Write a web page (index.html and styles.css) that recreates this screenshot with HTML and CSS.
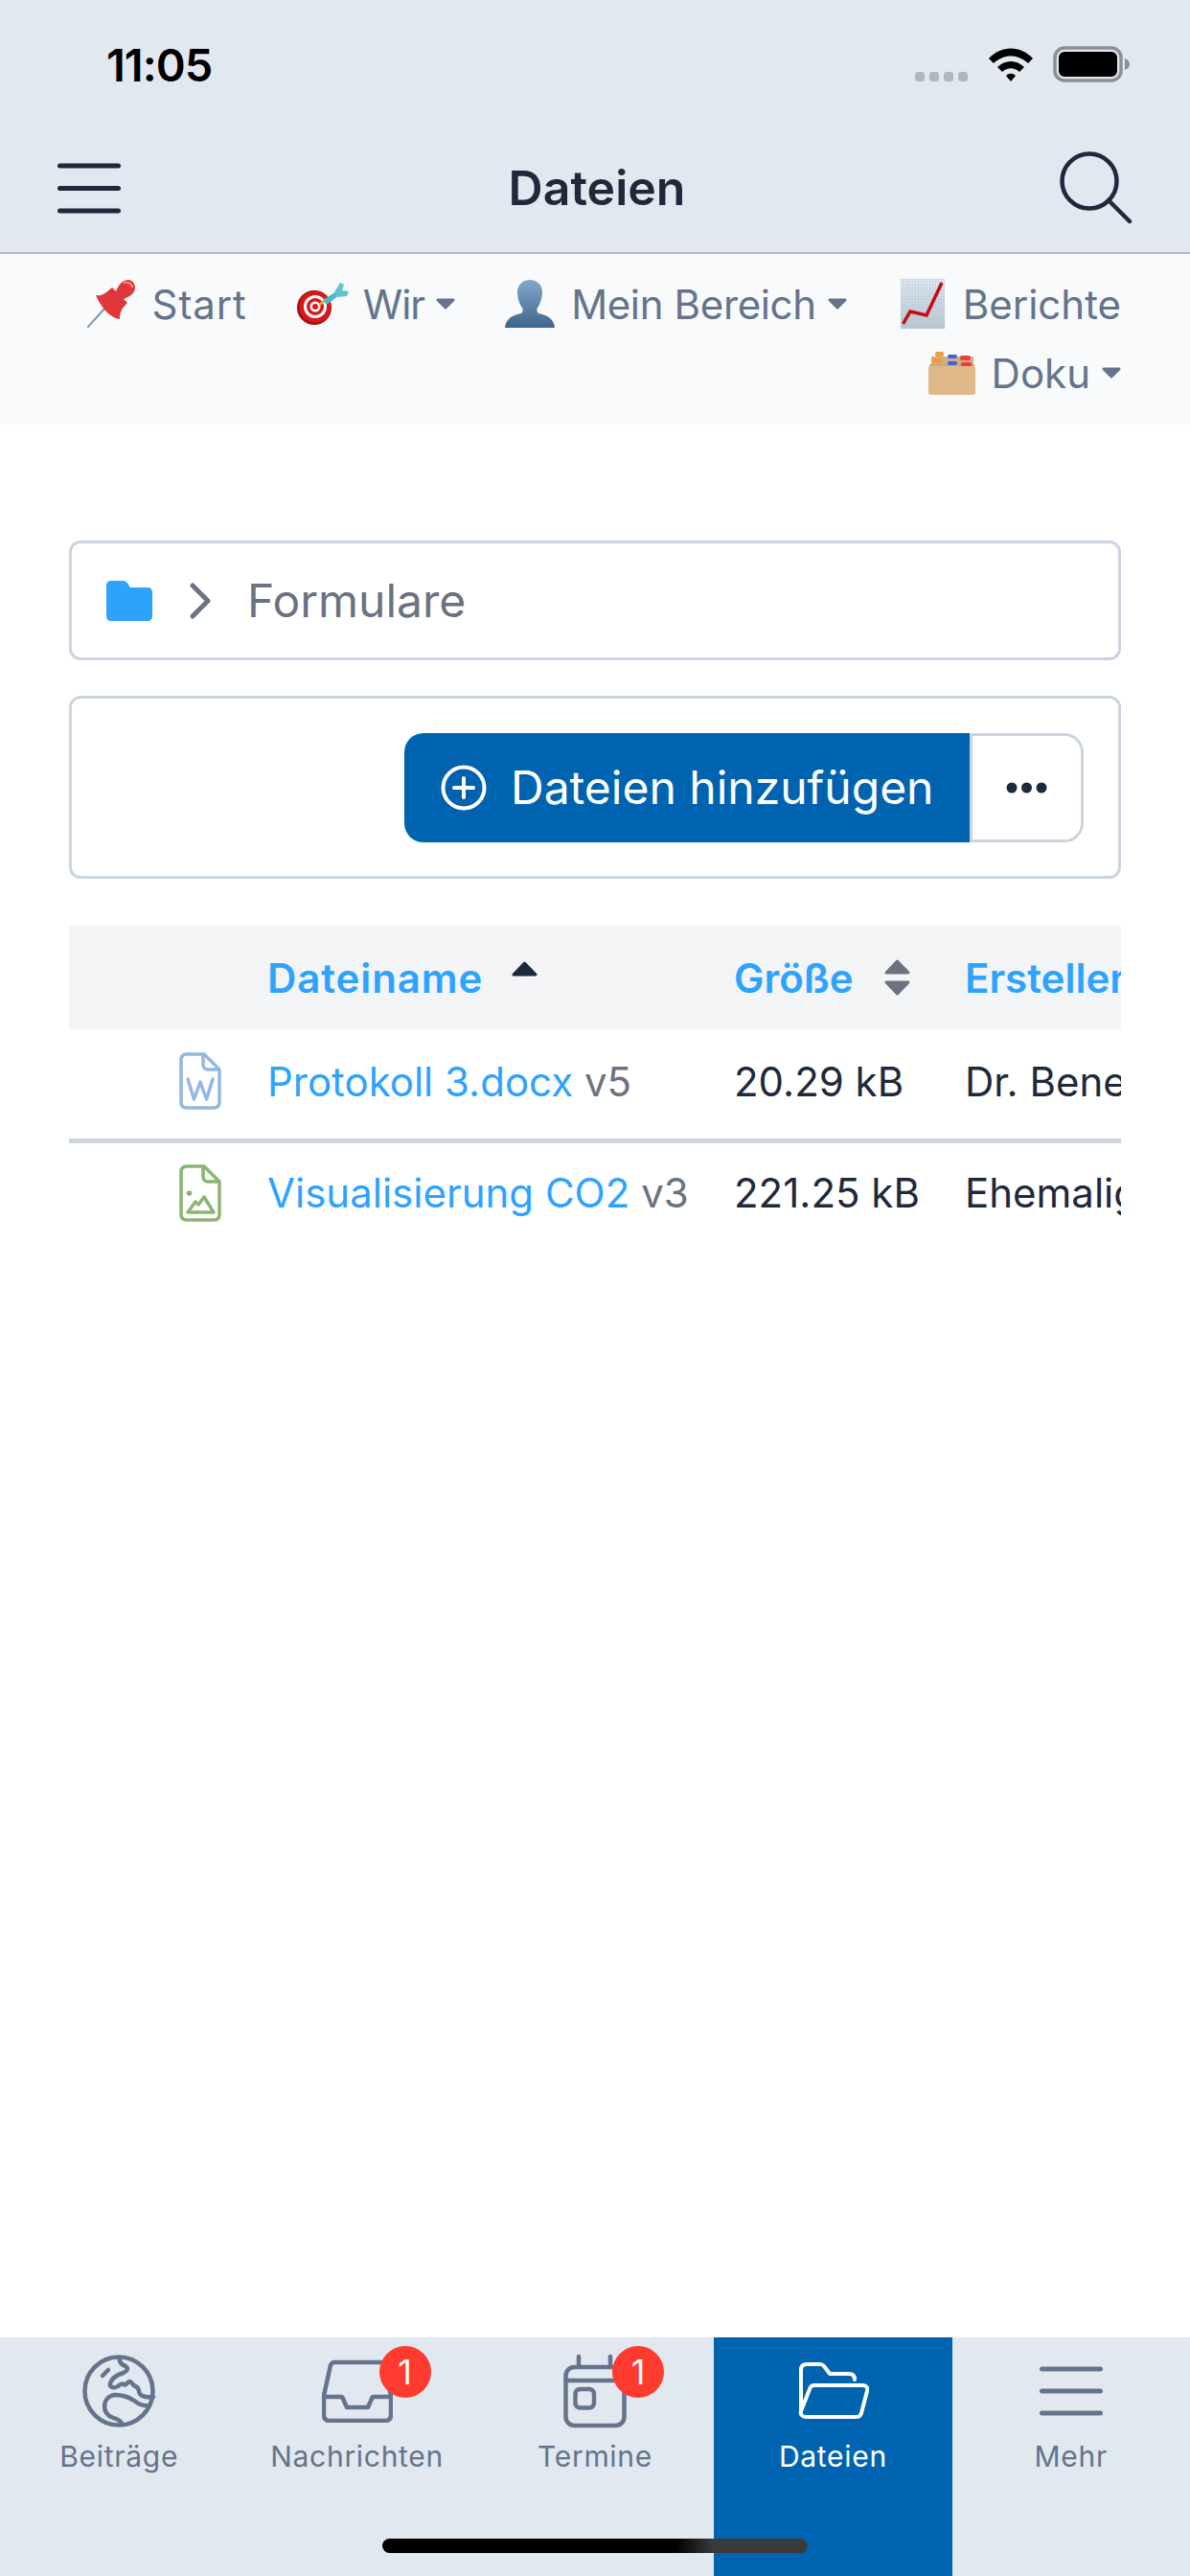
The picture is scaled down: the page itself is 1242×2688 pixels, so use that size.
FILE: index.html
```html
<!DOCTYPE html>
<html lang="de">
<head>
  <meta charset="UTF-8" />
  <meta name="viewport" content="width=device-width, initial-scale=1" />
  <title>Dateien</title>
  <link rel="stylesheet" href="styles.css">
</head>
<body>
  <div class="app">
    <header class="top">
      <div class="status-bar">
        <span class="time">11:05</span>
        <div class="status-icons">
          <svg class="signal" width="56" height="12" viewBox="0 0 56 12"><g fill="#b0b7c1"><rect x="0" y="1" width="10" height="10" rx="3"/><rect x="15" y="1" width="10" height="10" rx="3"/><rect x="30" y="1" width="10" height="10" rx="3"/><rect x="45" y="1" width="10" height="10" rx="3"/></g></svg>
          <svg class="wifi" width="48" height="38" viewBox="0 0 48 38"><path d="M1 13 C14 -1 34 -1 47 13 L42 18 C31 8 17 8 6 18Z M10 22 C18 14 30 14 38 22 L33 27 C27 22 21 22 15 27Z M19 31 C22 28 26 28 29 31 L24 37Z" fill="#000"/></svg>
          <svg class="battery" width="80" height="38" viewBox="0 0 80 38"><rect x="2" y="2" width="69" height="34" rx="10" fill="none" stroke="#8b9097" stroke-width="3.500"/><rect x="6" y="6" width="61" height="26" rx="6" fill="#000"/><path d="M75 13 C78 14 80 16 80 19 C80 22 78 24 75 25Z" fill="#8b9097"/></svg>
        </div>
      </div>
      <div class="nav-bar">
        <svg width="66" height="53" viewBox="0 0 66 53"><g stroke="#1e293b" stroke-width="5" stroke-linecap="round"><path d="M2.500 3H63.500M2.500 26.500H63.500M2.500 50H63.500"/></g></svg>
        <h1 class="nav-title">Dateien</h1>
        <svg width="76" height="76" viewBox="0 0 76 76"><circle cx="31" cy="31" r="28.500" fill="none" stroke="#1e293b" stroke-width="4.500"/><path d="M51 51L73 73" stroke="#1e293b" stroke-width="4.500" stroke-linecap="round"/></svg>
      </div>
    </header>

    <nav class="menu">
      <a class="menu-item">
        <svg class="emoji emoji-pin" width="50" height="50" viewBox="0 0 50 50">
          <path d="M0 50L19 29" stroke="#7f97ad" stroke-width="2"/>
          <path d="M9 16C15 17 18 15 26 8L30 12C33 4 38 0 43 0C47 0 50 4 50 8C50 13 46 17 38 20L42 24C35 31 34 35 34 41C28 41 16 33 9 16Z" fill="#e0383a"/>
          <path d="M38 3C43 2 47 4 47 8" stroke="#f58a85" stroke-width="2" fill="none"/>
        </svg>
        <span class="label-start">Start</span>
      </a>
      <a class="menu-item">
        <svg class="emoji emoji-target" width="54" height="46" viewBox="0 0 54 46">
          <circle cx="18" cy="27" r="18" fill="#a80f12"/>
          <circle cx="19" cy="26" r="16.500" fill="#d8191c"/>
          <circle cx="19" cy="26" r="12" fill="#fff"/>
          <circle cx="19" cy="26" r="9" fill="#d8191c"/>
          <circle cx="19" cy="26" r="5.500" fill="#fff"/>
          <circle cx="19" cy="26" r="3" fill="#d8191c"/>
          <path d="M23 24L30 19" stroke="#e8b81e" stroke-width="2.500"/>
          <path d="M27 19L41 10L44 14L31 24Z" fill="#4fb9c6"/>
          <path d="M39 11L45 1L49 3L47 9L54 10L52 15L43 16Z" fill="#5cc3cf"/>
        </svg>
        <span class="label-wir">Wir</span>
        <svg class="caret" width="20" height="12" viewBox="0 0 20 12"><path d="M2 2H18L10 10Z" fill="#64748b" stroke="#64748b" stroke-width="3" stroke-linejoin="round"/></svg>
      </a>
      <a class="menu-item">
        <svg class="emoji" width="52" height="50" viewBox="0 0 52 50">
          <defs><linearGradient id="skin" x1="0" y1="0" x2="0" y2="1"><stop offset="0" stop-color="#80a9ca"/><stop offset="1" stop-color="#40658c"/></linearGradient></defs>
          <path d="M0 50C1 40 8 37 17 35C19 33 19 31 18 29C14 24 13 16 13 13C13 4 20 0 26 0C32 0 39 4 39 13C39 16 38 24 34 29C33 31 33 33 35 35C44 37 51 40 52 50Z" fill="url(#skin)"/>
        </svg>
        <span class="label-mein">Mein Bereich</span>
        <svg class="caret" width="20" height="12" viewBox="0 0 20 12"><path d="M2 2H18L10 10Z" fill="#64748b" stroke="#64748b" stroke-width="3" stroke-linejoin="round"/></svg>
      </a>
      <a class="menu-item">
        <svg class="emoji emoji-chart" width="46" height="52" viewBox="0 0 46 52">
          <defs>
            <linearGradient id="paper" x1="0" y1="0" x2="0" y2="1"><stop offset="0" stop-color="#dfeaf4"/><stop offset="1" stop-color="#b9c7d3"/></linearGradient>
            <pattern id="grid" width="3" height="3" patternUnits="userSpaceOnUse"><path d="M3 0H0V3" fill="none" stroke="#a9bac9" stroke-width=".6"/></pattern>
          </defs>
          <rect width="46" height="52" fill="url(#paper)"/>
          <rect width="46" height="52" fill="url(#grid)"/>
          <path d="M2.500 47L10 34L27 38L43 4" fill="none" stroke="#c40d0d" stroke-width="3.500"/>
        </svg>
        <span>Berichte</span>
      </a>
      <a class="menu-item">
        <svg class="emoji" width="49" height="46" viewBox="0 0 49 46">
          <path d="M3 6H47V20H3Z" fill="#cdb088"/>
          <path d="M1 14H48V20H1Z" fill="#c9a87b"/>
          <rect x="7" y="1" width="9" height="5" rx="2" fill="#f39a3d"/>
          <rect x="20" y="4" width="10" height="4" rx="2" fill="#3f5fe0"/>
          <rect x="33" y="5" width="11" height="5" rx="2" fill="#ee4036"/>
          <rect x="4" y="8" width="10" height="5" rx="2" fill="#f39a3d"/>
          <rect x="20" y="11" width="10" height="4" rx="2" fill="#3f5fe0"/>
          <rect x="34" y="12" width="11" height="5" rx="2" fill="#ee4036"/>
          <rect y="16" width="49" height="30" rx="2" fill="#e0b988"/>
        </svg>
        <span>Doku</span>
        <svg class="caret" width="20" height="12" viewBox="0 0 20 12"><path d="M2 2H18L10 10Z" fill="#64748b" stroke="#64748b" stroke-width="3" stroke-linejoin="round"/></svg>
      </a>
    </nav>

    <main class="content">
      <div class="panel breadcrumb">
        <svg width="48" height="42" viewBox="0 0 48 42"><path d="M0 5C0 2 2 0 5 0H17C20 0 21 1 23 4L25 7H43C46 7 48 9 48 12V37C48 40 46 42 43 42H5C2 42 0 40 0 37Z" fill="#2ea3fd"/></svg>
        <svg class="crumb-sep" width="23" height="38" viewBox="0 0 23 38"><path d="M3 3L19 19L3 35" fill="none" stroke="#6b7280" stroke-width="5" stroke-linecap="round" stroke-linejoin="round"/></svg>
        <span class="crumb-name">Formulare</span>
      </div>

      <div class="panel toolbar">
        <button class="btn-add">
          <svg width="48" height="48" viewBox="0 0 48 48"><circle cx="24" cy="24" r="21.500" fill="none" stroke="#fff" stroke-width="4"/><path d="M24 14V34M14 24H34" stroke="#fff" stroke-width="4" stroke-linecap="round"/></svg>
          <span>Dateien hinzufügen</span>
        </button>
        <button class="btn-more">
          <svg width="43" height="12" viewBox="0 0 43 12"><g fill="#1e293b"><circle cx="6" cy="6" r="5.500"/><circle cx="21.500" cy="6" r="5.500"/><circle cx="37" cy="6" r="5.500"/></g></svg>
        </button>
      </div>

      <div class="file-table">
        <div class="table-row table-head">
          <div></div>
          <div class="head-cell"><span class="head-name">Dateiname</span>
            <svg class="sort-one" width="27" height="16" viewBox="0 0 27 16"><path d="M13.500 2L25 14H2Z" fill="#1e293b" stroke="#1e293b" stroke-width="3" stroke-linejoin="round"/></svg>
          </div>
          <div class="head-cell">Größe
            <svg class="sort-both" width="27" height="38" viewBox="0 0 27 38"><path d="M13.500 2L25 14H2ZM2 24H25L13.500 36Z" fill="#6b7280" stroke="#6b7280" stroke-width="3" stroke-linejoin="round"/></svg>
          </div>
          <div class="head-cell">Ersteller</div>
        </div>
        <div class="table-row file-row">
          <svg width="44" height="60" viewBox="0 0 44 60" class="file-icon file-word">
            <path d="M8 2H26L42 18V52C42 56 40 58 36 58H8C4 58 2 56 2 52V8C2 4 4 2 8 2Z M25 2V13C25 16 27 18 30 18H42" fill="none" stroke="currentColor" stroke-width="3.500" stroke-linejoin="round"/>
            <path d="M9 28L15.500 49L22 31L28.500 49L35 28" fill="none" stroke="currentColor" stroke-width="3.500" stroke-linecap="round" stroke-linejoin="round"/>
          </svg>
          <div><a class="file-link">Protokoll 3.docx</a> <span class="version">v5</span></div>
          <div>20.29 kB</div>
          <div>Dr. Benedikt Weber</div>
        </div>
        <div class="table-row file-row">
          <svg width="44" height="60" viewBox="0 0 44 60" class="file-icon file-image">
            <path d="M8 2H26L42 18V52C42 56 40 58 36 58H8C4 58 2 56 2 52V8C2 4 4 2 8 2Z M25 2V13C25 16 27 18 30 18H42" fill="none" stroke="currentColor" stroke-width="3.500" stroke-linejoin="round"/>
            <circle cx="10.500" cy="30" r="2.800" fill="currentColor"/>
            <path d="M9 50L17 39L20 42L26 34L36 50Z" fill="none" stroke="currentColor" stroke-width="3.500" stroke-linejoin="round"/>
          </svg>
          <div><a class="file-link">Visualisierung CO2</a> <span class="version">v3</span></div>
          <div>221.25 kB</div>
          <div>Ehemaliger Nutzer</div>
        </div>
      </div>
    </main>

    <footer class="tab-bar">
      <div class="tab">
        <div class="tab-icon">
          <svg width="80" height="80" viewBox="0 0 80 80"><g fill="none" stroke="#64748b" stroke-width="4.500" stroke-linecap="round" stroke-linejoin="round"><circle cx="40" cy="40" r="35.500"/><path d="M40.700 7C41 12 45 13 47 14C51 17 48 19 45 21C38 23 33 26 31 32C30 37 36 37 39 35C41 34 43 31 45 33C47 35 49 31 51 30C54 30 54 34 57 35C62 36 60 40 62 43C64 46 71 47 76 46"/><path d="M72 55C64 56 60 53 56 50C50 46 44 44 36 44C29 45 25 50 25 56C25 62 29 66 34 68C39 69 42 71 44 75"/><path d="M23 24L29 18"/></g></svg>
        </div>
        <span class="tab-label">Beiträge</span>
      </div>
      <div class="tab">
        <div class="tab-icon">
          <svg width="74" height="66" viewBox="0 0 74 66"><g fill="none" stroke="#64748b" stroke-width="4.500" stroke-linejoin="round"><path d="M13 3H61C63 3 64 4 65 6L72 38V58C72 62 70 64 66 64H8C4 64 2 62 2 58V38L9 6C10 4 11 3 13 3Z"/><path d="M2 39H20C21 39 22 40 22 41L26 50H48L52 41C52 40 53 39 55 39H72"/></g></svg>
          <span class="badge badge-inbox">1</span>
        </div>
        <span class="tab-label">Nachrichten</span>
      </div>
      <div class="tab">
        <div class="tab-icon">
          <svg width="70" height="78" viewBox="0 0 70 78"><g fill="none" stroke="#64748b" stroke-width="4.500" stroke-linecap="round" stroke-linejoin="round"><rect x="4.500" y="14" width="61" height="61" rx="9"/><path d="M18 3V14M51 3V14M4.500 28H65.500"/><rect x="14.500" y="37" width="19.500" height="19.500" rx="5"/></g></svg>
          <span class="badge badge-cal">1</span>
        </div>
        <span class="tab-label">Termine</span>
      </div>
      <div class="tab tab-active">
        <div class="tab-icon">
          <svg width="76" height="62" viewBox="0 0 76 62"><g fill="none" stroke="#fff" stroke-width="4" stroke-linejoin="round" stroke-linecap="round"><path d="M5 52V9C5 5 7 3 11 3H25C27 3 28 4 29 5L35 13H55C59 13 61 15 61 19"/><path d="M19 25H69C73 25 75 27 74 31L68 54C67 57 66 58 63 58H10C6 58 4 55 5 52L14 29C15 26 16 25 19 25Z"/></g></svg>
        </div>
        <span class="tab-label">Dateien</span>
      </div>
      <div class="tab">
        <div class="tab-icon">
          <svg width="66" height="52" viewBox="0 0 66 52"><path d="M2.500 3H63.500M2.500 26H63.500M2.500 49H63.500" stroke="#64748b" stroke-width="5" stroke-linecap="round"/></svg>
        </div>
        <span class="tab-label">Mehr</span>
      </div>
      <div class="home-indicator"></div>
    </footer>
  </div>
</body>
</html>
```

FILE: styles.css
```css
/* Page frame */
html, body {
  margin: 0;
  padding: 0;
}
body {
  background: #fff;
  font-family: Inter, "Noto Sans", sans-serif;
  color: #1e293b;
}
.app {
  width: 1242px;
  height: 2688px;
  display: flex;
  flex-direction: column;
  overflow: hidden;
}

/* Status bar and title bar */
.top {
  background: #e2e8f0;
  border-bottom: 2px solid #b4b8bd;
  height: 265px;
  box-sizing: border-box;
  flex: none;
}
.status-bar {
  height: 110px;
  padding: 0 63px 0 111px;
  display: flex;
  justify-content: space-between;
  align-items: center;
  box-sizing: border-box;
}
.time {
  font-size: 47px;
  font-weight: 600;
  color: #000;
  letter-spacing: -1px;
  margin-top: 24px;
}
.status-icons {
  display: flex;
  align-items: flex-end;
  gap: 20px;
  margin-top: 24px;
}
.nav-bar {
  display: flex;
  justify-content: space-between;
  align-items: center;
  padding: 48px 60px 0;
}
.nav-title {
  margin: 0 0 0 14px;
  font-size: 50px;
  font-weight: 600;
  color: #1e293b;
}

/* Top menu */
.menu {
  flex: none;
  background: #f8fafc;
  height: 178px;
  box-sizing: border-box;
  padding: 27px 72px 0 60px;
  display: flex;
  flex-wrap: wrap;
  justify-content: flex-end;
  align-content: flex-start;
  column-gap: 52px;
  row-gap: 22px;
}
.menu-item {
  display: flex;
  align-items: center;
  height: 50px;
  font-size: 42px;
  color: #64748b;
}
.menu-item .emoji {
  margin-right: 17px;
}
.menu-item .emoji-pin {
  margin-right: 18px;
}
.menu-item .emoji-target {
  margin-right: 15px;
}
.menu-item .emoji-chart {
  margin: 0 19px 0 4px;
}
.label-start {
  letter-spacing: .9px;
}
.label-wir {
  letter-spacing: -1px;
}
.label-mein {
  letter-spacing: -.35px;
}
.menu-item .caret {
  margin-left: 12px;
}

/* Main area */
.content {
  flex: 1;
  padding: 121px 72px 0;
}
.panel {
  border: 3px solid #cbd5e1;
  border-radius: 12px;
  box-sizing: border-box;
  display: flex;
  align-items: center;
}
.breadcrumb {
  height: 125px;
  padding-left: 36px;
}
.crumb-sep {
  margin-left: 39px;
}
.crumb-name {
  margin-left: 37px;
  font-size: 48px;
  color: #6b7280;
}
.toolbar {
  margin-top: 37px;
  height: 191px;
  justify-content: flex-end;
  padding-right: 36px;
}
.btn-add {
  height: 114px;
  width: 590px;
  border: none;
  border-radius: 20px 0 0 20px;
  background: #0063b0;
  color: #fff;
  font-family: inherit;
  font-size: 48px;
  display: flex;
  align-items: center;
  gap: 25px;
  padding: 0 0 0 38px;
}
.btn-more {
  height: 114px;
  width: 119px;
  box-sizing: border-box;
  background: #fff;
  border: 3px solid #cbd5e1;
  border-radius: 0 20px 20px 0;
  display: flex;
  align-items: center;
  justify-content: center;
  padding: 0;
}

/* File table */
.file-table {
  margin-top: 49px;
  width: 1098px;
  overflow: hidden;
}
.table-row {
  display: grid;
  grid-template-columns: 207px 487px 241px 400px;
  align-items: center;
  font-size: 42px;
  white-space: nowrap;
}
.table-head {
  height: 108px;
  background: #f3f4f6;
}
.head-cell {
  color: #2ea3fd;
  font-weight: 600;
  display: flex;
  align-items: center;
}
.head-name {
  letter-spacing: .9px;
}
.sort-one {
  margin: -18px 0 0 30px;
}
.sort-both {
  margin: 0 0 0 32px;
}
.file-row {
  height: 114px;
  box-sizing: border-box;
  padding-bottom: 6px;
  color: #1e293b;
}
.file-row + .file-row {
  border-top: 5px solid #cbd5e1;
  height: 108px;
  padding-bottom: 0;
}
.file-icon {
  justify-self: end;
  margin-right: 48px;
}
.file-word {
  color: #93b8e0;
}
.file-image {
  color: #8ab574;
}
.file-link {
  color: #2ea3fd;
}
.version {
  color: #6b7280;
}

/* Bottom tabs */
.tab-bar {
  position: relative;
  flex: none;
  height: 249px;
  background: #e2e8f0;
  display: grid;
  grid-template-columns: repeat(5, 1fr);
}
.tab {
  display: flex;
  flex-direction: column;
  align-items: center;
  padding-top: 16px;
  color: #64748b;
}
.tab-active {
  background: #0063b0;
  color: #fff;
}
.tab-icon {
  position: relative;
  height: 80px;
  display: flex;
  align-items: center;
}
.tab-label {
  margin-top: 10px;
  font-size: 30px;
  line-height: 36px;
  font-weight: 400;
  letter-spacing: .7px;
}
.badge {
  position: absolute;
  top: -7px;
  width: 54px;
  height: 54px;
  border-radius: 50%;
  background: #ff3b30;
  color: #fff;
  font-size: 36px;
  line-height: 54px;
  text-align: center;
}
.badge-inbox {
  right: -40px;
}
.badge-cal {
  right: -37px;
}
.home-indicator {
  position: absolute;
  left: 399px;
  bottom: 24px;
  width: 444px;
  height: 15px;
  border-radius: 8px;
  background: linear-gradient(to right, #000 69%, #3a3a3a 77.7%);
}
```
